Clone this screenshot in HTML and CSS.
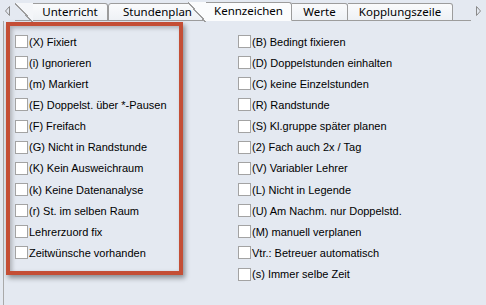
FILE: index.html
```html
<!DOCTYPE html>
<html lang="de">
<head>
  <meta charset="UTF-8">
  <title>Kennzeichen</title>
  <link rel="stylesheet" href="styles.css">
</head>
<body>
  <div class="window">
    <div class="tabbar">
      <svg class="arrow" width="15" height="20" viewBox="0 0 15 20"><path d="M9.5 5.5 L5.5 10 L9.5 14.5 Z" fill="none" stroke="#8a8a8a"/></svg>
      <div class="tabs">
        <div class="tab slant first">Unterricht</div>
        <div class="tab second">Stundenplan</div>
        <div class="tab slant active">Kennzeichen</div>
        <div class="tab werte">Werte</div>
        <div class="tab kopplung">Kopplungszeile</div>
      </div>
      <svg class="arrow right" width="15" height="20" viewBox="0 0 15 20"><path d="M5.5 5.5 L9.5 10 L5.5 14.5 Z" fill="none" stroke="#8a8a8a"/></svg>
    </div>

    <div class="panel">
      <div class="col highlight">
        <label class="row"><span class="box"></span>(X) Fixiert</label>
        <label class="row"><span class="box"></span>(i) Ignorieren</label>
        <label class="row"><span class="box"></span>(m) Markiert</label>
        <label class="row"><span class="box"></span>(E) Doppelst. über *-Pausen</label>
        <label class="row"><span class="box"></span>(F) Freifach</label>
        <label class="row"><span class="box"></span>(G) Nicht in Randstunde</label>
        <label class="row"><span class="box"></span>(K) Kein Ausweichraum</label>
        <label class="row"><span class="box"></span>(k) Keine Datenanalyse</label>
        <label class="row"><span class="box"></span>(r) St. im selben Raum</label>
        <label class="row"><span class="box"></span>Lehrerzuord fix</label>
        <label class="row"><span class="box"></span>Zeitwünsche vorhanden</label>
      </div>
      <div class="col right-col">
        <label class="row"><span class="box"></span>(B) Bedingt fixieren</label>
        <label class="row"><span class="box"></span>(D) Doppelstunden einhalten</label>
        <label class="row"><span class="box"></span>(C) keine Einzelstunden</label>
        <label class="row"><span class="box"></span>(R) Randstunde</label>
        <label class="row"><span class="box"></span>(S) Kl.gruppe später planen</label>
        <label class="row"><span class="box"></span>(2) Fach auch 2x / Tag</label>
        <label class="row"><span class="box"></span>(V) Variabler Lehrer</label>
        <label class="row"><span class="box"></span>(L) Nicht in Legende</label>
        <label class="row"><span class="box"></span>(U) Am Nachm. nur Doppelstd.</label>
        <label class="row"><span class="box"></span>(M) manuell verplanen</label>
        <label class="row"><span class="box"></span>Vtr.: Betreuer automatisch</label>
        <label class="row"><span class="box"></span>(s) Immer selbe Zeit</label>
      </div>
    </div>
  </div>
</body>
</html>
```

FILE: styles.css
```css
* {
  margin: 0;
  padding: 0;
  box-sizing: border-box;
}

body {
  font-family: 'Liberation Sans', Arial, sans-serif;
  font-size: 11px;
  color: #000;
  background: #e4e9f1;
  width: 486px;
  height: 305px;
  overflow: hidden;
}

.window {
  height: 305px;
  display: flex;
  flex-direction: column;
}

.tabbar {
  display: flex;
  height: 21px;
  align-items: flex-end;
}

.arrow {
  flex: none;
  align-self: center;
}

.tabs {
  display: flex;
  align-items: flex-end;
  width: 462px;
  height: 21px;
  border-bottom: 1px solid #9c9c9c;
}

.tab {
  position: relative;
  height: 18px;
  line-height: 16px;
  text-align: center;
  font-family: 'Noto Sans', 'Liberation Sans', sans-serif;
  font-size: 11.5px;
  color: #000;
  background: linear-gradient(#fafbfc, #eef1f5);
  border-top: 1px solid #9c9c9c;
  border-right: 1px solid #9c9c9c;
  border-radius: 0 3px 0 0;
  margin-bottom: -1px;
  border-bottom: 1px solid #9c9c9c;
}

.tab.slant::before {
  content: "";
  position: absolute;
  left: -18px;
  top: -1px;
  width: 18px;
  height: 19px;
  background: linear-gradient(to top right, transparent calc(50% - 1px), #9c9c9c calc(50% - 1px), #9c9c9c calc(50% + 0.5px), #f4f6f9 calc(50% + 0.5px));
}

.first {
  margin-left: 18px;
  width: 75px;
}

.second {
  width: 98px;
  border-left: 1px solid #9c9c9c;
  border-radius: 3px 3px 0 0;
  text-align: left;
  padding-left: 14px;
}

.active {
  z-index: 2;
  width: 86px;
  background: #fbfcfd;
  border-bottom-color: #fbfcfd;
  height: 19px;
}

.active::before {
  background: linear-gradient(to top right, transparent calc(50% - 1px), #9c9c9c calc(50% - 1px), #9c9c9c calc(50% + 0.5px), #fbfcfd calc(50% + 0.5px)) !important;
  height: 20px !important;
}

.werte {
  width: 56px;
}

.kopplung {
  width: 105px;
}

.panel {
  flex: 1;
  display: flex;
  align-items: flex-start;
  border-left: 1px solid #a9a9a9;
  margin-left: 3px;
  padding: 1px 0 0 2px;
}

.col {
  display: flex;
  flex-direction: column;
}

.highlight {
  width: 177px;
  height: 253px;
  border: 4px solid #c44e35;
  padding: 5px 0 0 5px;
  box-shadow: 2px 3px 5px rgba(0, 0, 0, 0.4), inset 2px 2px 4px rgba(0, 0, 0, 0.25);
}

.right-col {
  margin-left: 55px;
  padding-top: 9px;
}

.row {
  display: flex;
  align-items: center;
  height: 21.15px;
  white-space: nowrap;
}

.box {
  width: 13px;
  height: 13px;
  background: #fff;
  border: 1px solid #a3a3a3;
  margin-right: 1px;
  flex: none;
}
```
